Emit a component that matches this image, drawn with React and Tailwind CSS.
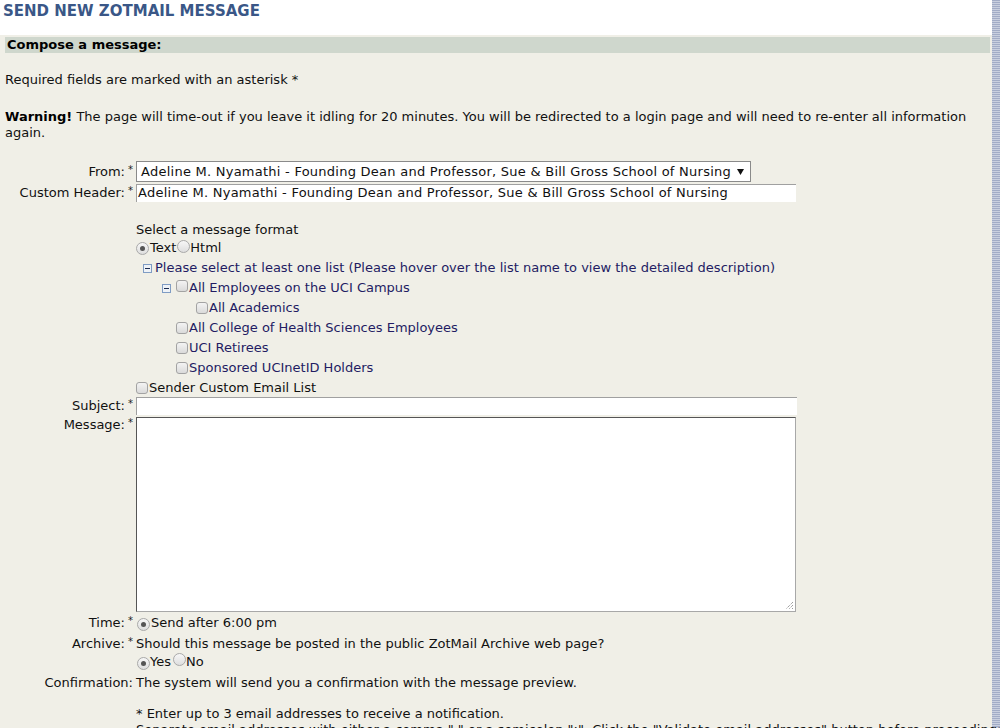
import React from "react";

function Req() {
  return <span className="ml-[3px] inline-block align-top text-[10px] leading-[12px] text-[#222]">*</span>;
}

function Radio({ checked }) {
  return (
    <span className="inline-flex h-[13px] w-[13px] shrink-0 items-center justify-center rounded-full border border-[#a9a9a9] bg-[linear-gradient(#f7f7f7,#dedede)]">
      {checked && <span className="h-[5px] w-[5px] rounded-full bg-[#555]" />}
    </span>
  );
}

function Check() {
  return (
    <span className="inline-block h-[12px] w-[12px] shrink-0 rounded-[3px] border border-[#a3a3a3] bg-[linear-gradient(#f3f3f3,#dadada)]" />
  );
}

function Minus() {
  return (
    <svg width="9" height="9" viewBox="0 0 9 9" className="shrink-0">
      <rect x="0.5" y="0.5" width="8" height="8" fill="#eef2f7" stroke="#7f9cc4" />
      <rect x="2" y="4" width="5" height="1" fill="#1a2a50" />
    </svg>
  );
}

function Row({ label, req, children, className = "" }) {
  return (
    <div className={"flex " + className}>
      <div className="w-[133px] shrink-0 text-right">
        {label}
        {req && <Req />}
      </div>
      <div className="ml-[3px] flex-1">{children}</div>
    </div>
  );
}

const tree = "text-[#231c63]";

export default function App() {
  return (
    <div className="h-[728px] overflow-hidden bg-[repeating-linear-gradient(to_bottom,#a2acc6_0px,#a2acc6_1px,#c9cfdf_1px,#c9cfdf_2px)] font-['DejaVu_Sans',sans-serif] text-[13px] leading-[16px] text-[#111]">
      <div className="w-[992px]">
        <div className="h-[35px] bg-white pl-[3px] pt-[3px]">
          <h1 className="text-[15px] font-bold leading-[16px] text-[#3a5787]">SEND NEW ZOTMAIL MESSAGE</h1>
        </div>
        <div className="h-[693px] bg-[#f0efe7] pt-[2px]">
          <div className="ml-[5px] mr-[2px] h-[16px] bg-[#cfd7cd] pl-[2px] font-bold leading-[16px] text-black">
            Compose a message:
          </div>
          <div className="pl-[5px] pr-[20px]">
            <p className="mt-[19px]">Required fields are marked with an asterisk *</p>
            <p className="mt-[21px]">
              <b className="text-black">Warning!</b> The page will time-out if you leave it idling for 20 minutes. You will be redirected to a login page and will need to re-enter all information again.
            </p>
          </div>

          <Row label="From:" req className="mt-[20px] h-[21px] items-center">
            <div className="flex h-[21px] w-[615px] items-center justify-between border border-[#8a8a8a] bg-white pl-[4px] pr-[6px]">
              <span className="tracking-[0.25px]">Adeline M. Nyamathi - Founding Dean and Professor, Sue &amp; Bill Gross School of Nursing</span>
              <svg width="7" height="6" viewBox="0 0 7 6"><path d="M0 0h7L3.5 6z" fill="#111" /></svg>
            </div>
          </Row>
          <Row label="Custom Header:" req className="mt-[1px] h-[19px] items-center">
            <div className="flex h-[18px] w-[660px] items-center border-l border-t border-l-[#a0a0a0] border-t-[#a0a0a0] bg-white pl-[1px] tracking-[0.25px]">
              Adeline M. Nyamathi - Founding Dean and Professor, Sue &amp; Bill Gross School of Nursing
            </div>
          </Row>

          <Row label="" className="mt-[19px]">
            <div className="h-[18px] leading-[18px]">Select a message format</div>
            <div className="flex h-[18px] items-center">
              <Radio checked />
              <span className="ml-[1px]">Text</span>
              <span className="ml-[1px]"><Radio /></span>
              <span>Html</span>
            </div>
            <div className="mt-[1px] flex h-[20px] items-center pl-[7px]">
              <Minus />
              <span className={"ml-[3px] " + tree}>Please select at least one list (Please hover over the list name to view the detailed description)</span>
            </div>
            <div className="flex h-[20px] items-center pl-[26px]">
              <Minus />
              <span className="ml-[5px]"><Check /></span>
              <span className={"ml-[1px] " + tree}>All Employees on the UCI Campus</span>
            </div>
            <div className="flex h-[20px] items-center pl-[60px]">
              <Check />
              <span className={"ml-[1px] " + tree}>All Academics</span>
            </div>
            <div className="flex h-[20px] items-center pl-[40px]">
              <Check />
              <span className={"ml-[1px] " + tree}>All College of Health Sciences Employees</span>
            </div>
            <div className="flex h-[20px] items-center pl-[40px]">
              <Check />
              <span className={"ml-[1px] " + tree}>UCI Retirees</span>
            </div>
            <div className="flex h-[20px] items-center pl-[40px]">
              <Check />
              <span className={"ml-[1px] " + tree}>Sponsored UCInetID Holders</span>
            </div>
            <div className="flex h-[20px] items-center">
              <Check />
              <span className="ml-[1px]">Sender Custom Email List</span>
            </div>
          </Row>

          <Row label="Subject:" req className="-mt-[1px] h-[18px] items-center">
            <div className="h-[18px] w-[661px] border-l border-t border-l-[#a0a0a0] border-t-[#a0a0a0] bg-white" />
          </Row>
          <Row label="Message:" req className="mt-[2px]">
            <div className="relative h-[195px] w-[660px] border border-b-[#a8a8a8] border-l-[#555] border-r-[#a8a8a8] border-t-[#555] bg-white">
              <svg width="9" height="9" viewBox="0 0 9 9" className="absolute bottom-[1px] right-[1px]">
                <path d="M8 1L1 8M8 4L4 8M8 7L7 8" stroke="#777" strokeWidth="1" strokeDasharray="1 1" />
              </svg>
            </div>
          </Row>

          <Row label="Time:" req className="mt-[2px] h-[18px] items-center">
            <div className="flex items-center">
              <span className="ml-[1px]"><Radio checked /></span>
              <span className="ml-[1px]">Send after 6:00 pm</span>
            </div>
          </Row>
          <Row label="Archive:" req className="mt-[4px]">
            <div>Should this message be posted in the public ZotMail Archive web page?</div>
            <div className="flex h-[19px] items-center">
              <span className="ml-[1px]"><Radio checked /></span>
              <span>Yes</span>
              <span className="ml-[2px]"><Radio /></span>
              <span>No</span>
            </div>
          </Row>
          <Row label="Confirmation:" className="mt-[4px]">
            <div>The system will send you a confirmation with the message preview.</div>
            <div className="h-[15px]" />
            <div>* Enter up to 3 email addresses to receive a notification.</div>
            <div className="whitespace-nowrap">
              Separate email addresses with either a comma &quot;,&quot; or a semicolon &quot;;&quot;. Click the &quot;Validate email addresses&quot; button before proceeding:
            </div>
          </Row>
        </div>
      </div>
    </div>
  );
}
